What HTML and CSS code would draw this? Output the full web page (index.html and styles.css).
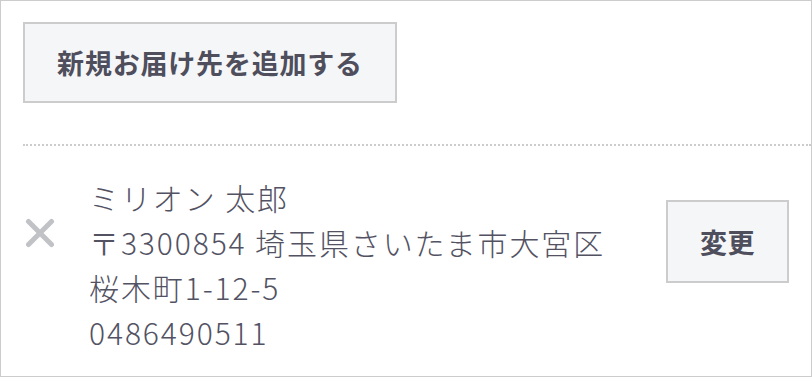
FILE: index.html
```html
<!DOCTYPE html>
<html lang="ja">
<head>
<meta charset="utf-8">
<link rel="stylesheet" href="styles.css">
</head>
<body>
<div class="panel">
  <div class="add-area">
    <button class="btn btn-add">新規お届け先を追加する</button>
  </div>
  <div class="sep"></div>
  <div class="item">
    <span class="remove">
      <svg width="30" height="30" viewBox="0 0 30 30"><path d="M3.5 3.5 L26.5 26.5 M26.5 3.5 L3.5 26.5" stroke="#c0c2c6" stroke-width="5" stroke-linecap="round" fill="none"/></svg>
    </span>
    <div class="addr">
      <div>ミリオン 太郎</div>
      <div>〒3300854 埼玉県さいたま市大宮区</div>
      <div>桜木町1-12-5</div>
      <div>0486490511</div>
    </div>
    <button class="btn btn-change">変更</button>
  </div>
</div>
</body>
</html>
```
FILE: styles.css
```css
html, body {
  margin: 0;
  padding: 0;
  background: #fff;
}
.panel {
  width: 812px;
  height: 377px;
  box-sizing: border-box;
  border: 1px solid #cccccc;
  padding: 21px 0 0 22px;
  font-family: "Noto Sans CJK JP", "Noto Sans", sans-serif;
}
.add-area {
  display: flex;
}
.btn {
  font-family: "Noto Sans CJK JP", sans-serif;
  font-weight: 700;
  color: #4e4e5c;
  background: #f5f6f8;
  border: 2px solid #cccccc;
  box-sizing: border-box;
  margin: 0;
  padding: 0;
  display: flex;
  align-items: center;
  justify-content: center;
}
.btn-add {
  width: 374px;
  height: 81px;
  font-size: 27px;
  letter-spacing: 0.8px;
}
.sep {
  margin-top: 41px;
  border-top: 2px dotted #cccccc;
}
.item {
  display: flex;
  align-items: flex-start;
  padding-top: 29px;
}
.remove {
  display: block;
  width: 30px;
  height: 30px;
  margin: 43px 0 0 2px;
}
.remove svg {
  display: block;
}
.addr {
  flex: 1;
  margin-left: 34px;
  font-size: 30px;
  line-height: 45px;
  letter-spacing: 1.9px;
  font-weight: 300;
  color: #525263;
}
.btn-change {
  width: 123px;
  height: 83px;
  font-size: 27px;
  letter-spacing: 0.5px;
  margin: 25px 22px 0 0;
}
```
